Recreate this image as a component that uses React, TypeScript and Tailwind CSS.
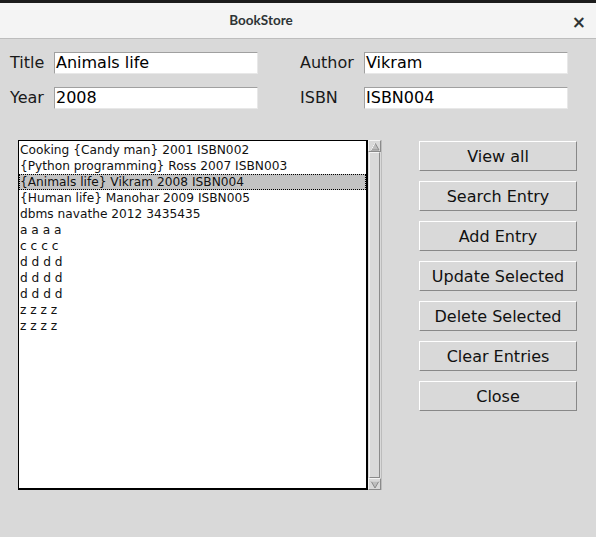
const ROWS = [
  "Cooking {Candy man} 2001 ISBN002",
  "{Python programming} Ross 2007 ISBN003",
  "{Animals life} Vikram 2008 ISBN004",
  "{Human life} Manohar 2009 ISBN005",
  "dbms navathe 2012 3435435",
  "a a a a",
  "c c c c",
  "d d d d",
  "d d d d",
  "d d d d",
  "z z z z",
  "z z z z",
];

const BUTTONS = ["View all", "Search Entry", "Add Entry", "Update Selected", "Delete Selected", "Clear Entries", "Close"];

function Field({ label, value, labelW }: { label: string; value: string; labelW: string }) {
  return (
    <div className="flex items-center h-[22px]">
      <span className={`${labelW} text-[16px] leading-[22px] text-[#1a1a1a]`}>{label}</span>
      <div className="w-[204px] h-[22px] bg-white border border-t-[#a0a0a0] border-l-[#a0a0a0] border-b-[#e8e8e8] border-r-[#e8e8e8] px-[1px] text-[16px] leading-[20px] text-black">
        {value}
      </div>
    </div>
  );
}

export default function App() {
  return (
    <div className="w-[596px] h-[537px] bg-[#d9d9d9] flex flex-col overflow-hidden" style={{ fontFamily: '"DejaVu Sans", sans-serif' }}>
      <div className="h-[3px] bg-[#1c1c1c]" />
      {/* Title bar */}
      <div className="h-[36px] bg-[#f4f4f4] border-b border-[#bdbdbd] flex items-center relative">
        <span className="w-[522px] text-center text-[13.5px] font-bold text-[#2e3436]" style={{ fontFamily: 'Lato, sans-serif' }}>BookStore</span>
        <span className="absolute right-[10px] top-[7px] text-[17px] font-bold text-[#2e3436]">×</span>
      </div>

      {/* Entries */}
      <div className="pl-[10px] pt-[13px] flex gap-[42px]">
        <div className="flex flex-col gap-[13px]">
          <Field label="Title" value="Animals life" labelW="w-[44px]" />
          <Field label="Year" value="2008" labelW="w-[44px]" />
        </div>
        <div className="flex flex-col gap-[13px]">
          <Field label="Author" value="Vikram" labelW="w-[64px]" />
          <Field label="ISBN" value="ISBN004" labelW="w-[64px]" />
        </div>
      </div>

      {/* List + buttons */}
      <div className="flex pl-[18px] pt-[31px]">
        <div className="w-[350px] h-[350px] bg-white border border-black border-b-2 border-r-2 pt-[1px] flex flex-col text-[12.2px] leading-[16px] text-[#111]">
          {ROWS.map((r, i) =>
            i === 2 ? (
              <div key={i} className="bg-[#c3c3c3] border border-dotted border-black leading-[14px] h-[16px]">{r}</div>
            ) : (
              <div key={i} className="pl-[1px] h-[16px]">{r}</div>
            )
          )}
        </div>
        {/* Scrollbar */}
        <div className="w-[14px] h-[350px] flex flex-col bg-[#d9d9d9] border-r border-[#bcbcbc]">
          <div className="h-[12px] flex items-center justify-center border border-[#f4f4f4] border-b-[#8a8a8a] border-r-[#8a8a8a]">
            <svg width="10" height="9" viewBox="0 0 10 9">
              <polygon points="5,1 9,8 1,8" fill="#bdbdbd" stroke="#8a8a8a" strokeWidth="1" />
              <line x1="5" y1="1" x2="1" y2="8" stroke="#ffffff" strokeWidth="1" />
            </svg>
          </div>
          <div className="flex-1 mx-[1px] border border-[#f4f4f4] border-b-[#8a8a8a] border-r-[#8a8a8a]" />
          <div className="h-[12px] flex items-center justify-center border border-[#f4f4f4] border-b-[#8a8a8a] border-r-[#8a8a8a]">
            <svg width="10" height="9" viewBox="0 0 10 9">
              <polygon points="1,1 9,1 5,8" fill="#bdbdbd" stroke="#8a8a8a" strokeWidth="1" />
              <line x1="1" y1="1" x2="9" y2="1" stroke="#ffffff" strokeWidth="1" />
            </svg>
          </div>
        </div>

        <div className="ml-[37px] flex flex-col gap-[10px] pt-[1px]">
          {BUTTONS.map(b => (
            <button key={b} className="w-[158px] h-[30px] pt-[2px] bg-[#d9d9d9] border border-t-[#ffffff] border-l-[#ffffff] border-b-[#888888] border-r-[#888888] text-[16px] text-[#111] leading-none">
              {b}
            </button>
          ))}
        </div>
      </div>
    </div>
  );
}
